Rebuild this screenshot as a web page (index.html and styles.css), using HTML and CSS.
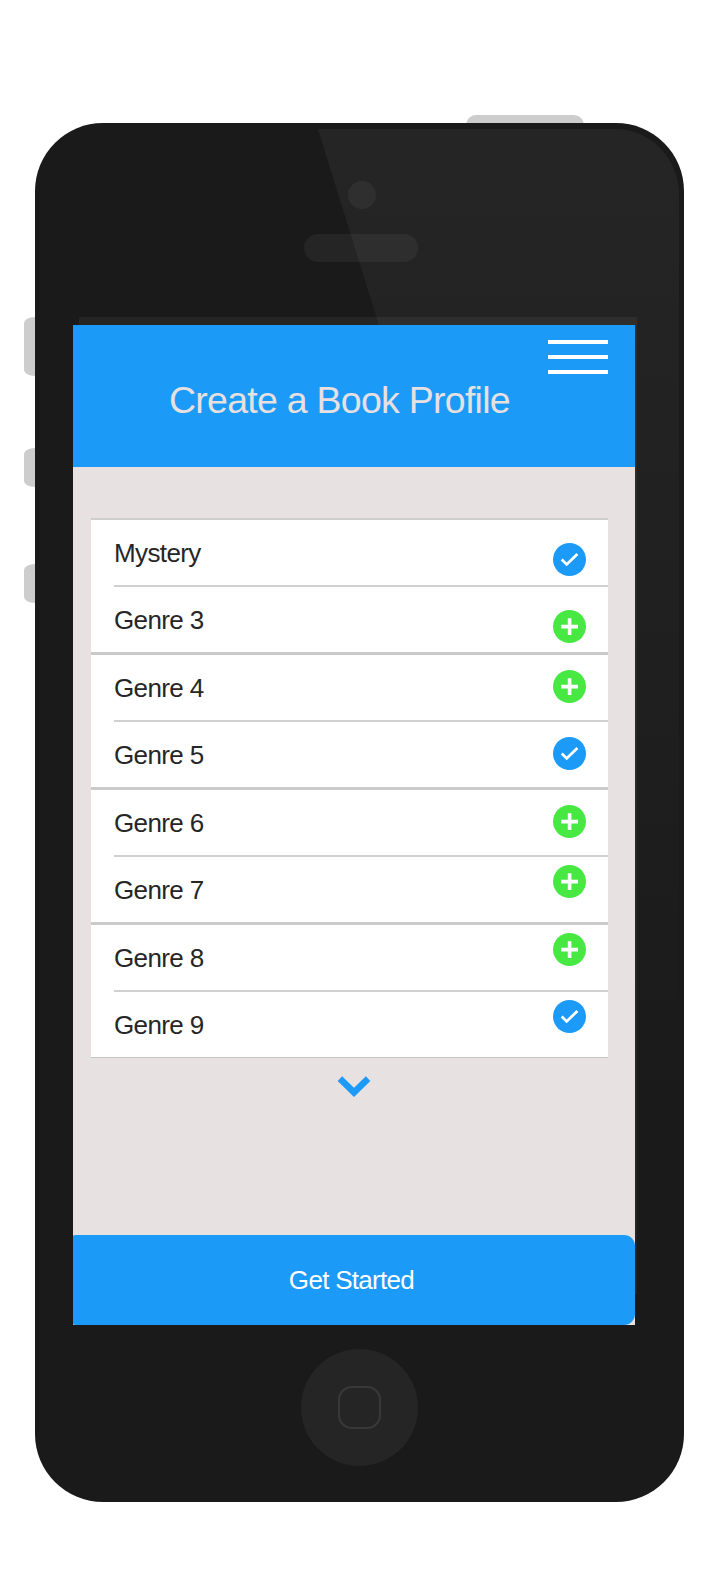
FILE: index.html
```html
<!DOCTYPE html>
<html lang="en">
<head>
<meta charset="utf-8">
<title>Create a Book Profile</title>
<link rel="stylesheet" href="styles.css">
</head>
<body>
<svg class="defs" width="0" height="0" aria-hidden="true">
  <symbol id="check" viewBox="0 0 33 33"><circle cx="16.5" cy="16.5" r="16.5" fill="#1c9af8"/><path d="M8.7 16.6 13.7 21.4 24.4 10.9" fill="none" stroke="#fff" stroke-width="2.8"/></symbol>
  <symbol id="plus" viewBox="0 0 33 33"><circle cx="16.5" cy="16.5" r="16.5" fill="#48e843"/><path d="M8.2 16.6H25M16.6 8.2V25" fill="none" stroke="#fff" stroke-width="3.6"/></symbol>
</svg>
<div class="phone">
  <i class="key key-power"></i>
  <i class="key key-mute"></i>
  <i class="key key-up"></i>
  <i class="key key-down"></i>
  <div class="body">
    <span class="camera"></span>
    <span class="speaker"></span>
    <i class="bezel"></i>
    <svg class="glare" viewBox="0 0 361 1000" aria-hidden="true">
      <defs><linearGradient id="fade" x1="0" y1="0" x2="0" y2="1"><stop offset="0" stop-color="#fff" stop-opacity=".05"/><stop offset="1" stop-color="#fff" stop-opacity="0"/></linearGradient></defs>
      <path d="M0 0H297A64 66 0 0 1 361 66V1000H311Z" fill="url(#fade)"/>
    </svg>
    <main class="screen">
      <header class="header">
        <div class="menu"><span></span><span></span><span></span></div>
        <h1 class="title">Create a Book Profile</h1>
      </header>
      <section class="content">
        <div class="list">
          <ul class="group">
            <li class="row"><span>Mystery</span><svg class="mark low"><use href="#check"/></svg></li>
            <li class="row"><span>Genre 3</span><svg class="mark low"><use href="#plus"/></svg></li>
          </ul>
          <ul class="group">
            <li class="row"><span>Genre 4</span><svg class="mark"><use href="#plus"/></svg></li>
            <li class="row"><span>Genre 5</span><svg class="mark"><use href="#check"/></svg></li>
          </ul>
          <ul class="group">
            <li class="row"><span>Genre 6</span><svg class="mark"><use href="#plus"/></svg></li>
            <li class="row"><span>Genre 7</span><svg class="mark high"><use href="#plus"/></svg></li>
          </ul>
          <ul class="group">
            <li class="row"><span>Genre 8</span><svg class="mark high"><use href="#plus"/></svg></li>
            <li class="row"><span>Genre 9</span><svg class="mark high"><use href="#check"/></svg></li>
          </ul>
        </div>
        <svg class="more" viewBox="0 0 34 22"><path d="M2.9 2.6 17 16.4 31.1 2.6" fill="none" stroke="#1c9af8" stroke-width="6.4"/></svg>
      </section>
      <button class="start">Get Started</button>
    </main>
    <span class="home"><i class="home-icon"></i></span>
  </div>
</div>
</body>
</html>
```
FILE: styles.css
```css
* { box-sizing: border-box; }
body {
  margin: 0;
  background: #fff;
  font-family: "Liberation Sans", Arial, sans-serif;
}
.defs { position: absolute; }
.phone {
  position: relative;
  width: 720px;
  height: 1584px;
  padding: 123.4px 35.6px 0 35px;
  overflow: hidden;
}
.body {
  position: relative;
  display: flex;
  flex-direction: column;
  align-items: center;
  height: 1378.3px;
  padding-top: 58px;
  border-radius: 68px;
  background: #1a1a1a;
}

/* Hardware keys protruding from the case */
.key { position: absolute; background: #cdcdcd; }
.key-power { left: 466px; top: 115px; width: 118px; height: 20px; border-radius: 12px; }
.key-mute, .key-up, .key-down { left: 24px; width: 22px; border-radius: 11px / 6px; }
.key-mute { top: 317px; height: 59px; }
.key-up { top: 448px; height: 39px; }
.key-down { top: 564px; height: 39px; }

.camera { width: 28px; height: 28px; margin-left: 5px; border-radius: 50%; background: #252525; }
.speaker { width: 114px; height: 28px; margin: 25px 0 62.6px 2px; border-radius: 14px; background: #252525; }
.bezel {
  position: absolute;
  left: 44px;
  top: 193.6px;
  width: 558px;
  height: 977px;
  background: #252525;
}
.glare { position: absolute; left: 283px; top: 5.6px; width: 361px; height: 1000px; }

.screen {
  position: relative;
  display: flex;
  flex-direction: column;
  align-self: flex-start;
  width: 562px;
  height: 1000px;
  margin-left: 38px;
  background: #e7e1e1;
  overflow: hidden;
  flex: none;
}
.header {
  display: flex;
  flex-direction: column;
  height: 142px;
  padding: 15px 27px 0 0;
  background: #1c9af8;
}
.menu { display: flex; flex-direction: column; gap: 11px; align-self: flex-end; width: 60px; }
.menu span { height: 4px; background: #fff; }
.title {
  margin: 6px 0 0;
  padding-left: 96px;
  font-size: 37.5px;
  line-height: 40px;
  font-weight: 400;
  letter-spacing: -0.74px;
  color: #e6e0e0;
  white-space: nowrap;
}
.content {
  display: flex;
  flex-direction: column;
  align-items: center;
  height: 768px;
  padding: 51px 27px 0 18px;
}
.list { width: 517px; background: #fff; border-bottom: 1px solid #c4c4c4; }
.group { margin: 0; padding: 0; list-style: none; border-top: 3px solid #cacaca; }
.group:first-child { border-top: 2px solid #cecece; }
.row {
  display: flex;
  justify-content: space-between;
  height: 65px;
  margin-left: 23px;
  padding-right: 22.5px;
  font-size: 26px;
  line-height: 66px;
  letter-spacing: -0.62px;
  color: #262626;
}
.row:first-child { height: 67px; border-bottom: 2px solid #d0d0d0; }
.mark { width: 33px; height: 33px; margin-top: 15px; }
.mark.low { margin-top: 23px; }
.mark.high { margin-top: 8px; }
.more { width: 34px; height: 22px; margin: 18px 0 0 9px; }
.start {
  width: 570px;
  height: 90px;
  margin: 0 0 0 -8px;
  padding: 0 0 0 3px;
  border: 0;
  border-radius: 11px;
  background: #1c9af8;
  color: #fff;
  font: 26px/90px "Liberation Sans", Arial, sans-serif;
  letter-spacing: -0.7px;
}
.home {
  display: flex;
  align-items: center;
  justify-content: center;
  flex: none;
  width: 117px;
  height: 117px;
  margin-top: 24px;
  border-radius: 50%;
  background: #252525;
}
.home-icon { width: 43px; height: 43px; border: 2px solid #393939; border-radius: 14px; }
```
